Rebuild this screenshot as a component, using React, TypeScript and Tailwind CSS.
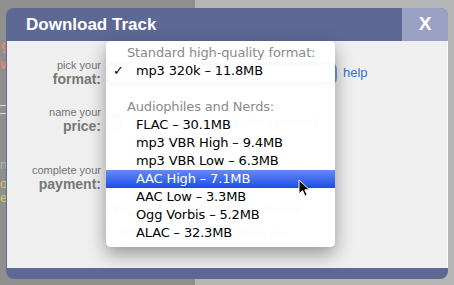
import { Fragment } from "react";

type MenuRow =
  | { kind: "header"; label: string }
  | { kind: "item"; label: string; checked?: boolean; active?: boolean }
  | { kind: "gap" };

const rows: MenuRow[] = [
  { kind: "header", label: "Standard high-quality format:" },
  { kind: "item", label: "mp3 320k – 11.8MB", checked: true },
  { kind: "gap" },
  { kind: "header", label: "Audiophiles and Nerds:" },
  { kind: "item", label: "FLAC – 30.1MB" },
  { kind: "item", label: "mp3 VBR High – 9.4MB" },
  { kind: "item", label: "mp3 VBR Low – 6.3MB" },
  { kind: "item", label: "AAC High – 7.1MB", active: true },
  { kind: "item", label: "AAC Low – 3.3MB" },
  { kind: "item", label: "Ogg Vorbis – 5.2MB" },
  { kind: "item", label: "ALAC – 32.3MB" },
];

const Label = ({ small, big }: { small: string; big: string }) => (
  <div className="w-[94px] shrink-0 text-right font-['Liberation_Sans',Arial,sans-serif]">
    <div className="text-[11px] leading-[14px] text-[#737373]">{small}</div>
    <div className="text-[14px] leading-[14px] font-bold text-[#777]">{big}</div>
  </div>
);

const Cursor = () => (
  <svg width="13" height="19" viewBox="0 0 13 19" className="absolute left-[298px] top-[179px]">
    <path
      d="M1 1 L1 15 L4.5 11.6 L7 17.2 L9.2 16.2 L6.8 10.8 L11.5 10.8 Z"
      fill="#000"
      stroke="#fff"
      strokeWidth="1"
      strokeLinejoin="round"
    />
  </svg>
);

const PopupMenu = () => (
  <div className="absolute left-[106px] top-[41px] w-[229px] h-[206px] pt-[3px] rounded-[5px] bg-white/[0.95] shadow-[0_7px_18px_rgba(0,0,0,0.38)] font-['DejaVu_Sans',sans-serif] text-[13px] tracking-[-0.15px]">
    {rows.map((row, i) => (
      <Fragment key={i}>
        {row.kind === "gap" && <div className="h-[18px]" />}
        {row.kind === "header" && (
          <div className="h-[18px] leading-[18px] pl-[21px] text-[#8a8a8a]">{row.label}</div>
        )}
        {row.kind === "item" && (
          <div
            className={
              row.active
                ? "flex h-[18px] leading-[18px] text-white bg-gradient-to-b from-[#6688f6] to-[#1a4de8]"
                : "flex h-[18px] leading-[18px] text-black"
            }
          >
            <span className="w-[30px] pl-[7px]">{row.checked ? "✓" : ""}</span>
            <span>{row.label}</span>
          </div>
        )}
      </Fragment>
    ))}
  </div>
);

export default function App() {
  return (
    <div className="relative w-[454px] h-[285px] overflow-hidden flex">
      {/* page behind the overlay */}
      <div className="w-[195px] bg-[#8f8f8f] flex flex-col pt-[36px] text-[15px] font-bold leading-[18px] font-['Liberation_Sans',Arial,sans-serif]">
        <div className="w-[6px] overflow-hidden text-[#e4867b] pl-[1px]">g</div>
        <div className="w-[6px] overflow-hidden text-[#e4867b] mt-[1px]">w</div>
        <div className="w-[6px] h-px bg-[#d8d8d8] mt-[32px]" />
        <div className="w-[6px] h-px bg-[#d8d8d8] mt-[7px]" />
        <div className="w-[6px] overflow-hidden text-[#b4b4b4] font-normal text-[13px] mt-[42px]">n</div>
        <div className="w-[6px] overflow-hidden text-[#d8c868] font-normal text-[13px] mt-[1px]">o</div>
        <div className="w-[6px] overflow-hidden text-[#d8c868] font-normal text-[13px] -mt-[4px]">er</div>
      </div>
      <div className="flex-1 bg-[#b6b6b6]" />

      {/* dialog */}
      <div className="absolute left-[6px] top-[8px] w-[442px] h-[271px] rounded-[8px] bg-[#5d6895] overflow-hidden flex flex-col">
        <div className="h-[33px] flex shrink-0">
          <div className="flex-1 pl-[20px] leading-[33px] text-[17px] font-bold text-white font-['Liberation_Sans',Arial,sans-serif]">
            Download Track
          </div>
          <div className="w-[46px] bg-[#9ba1c3] flex items-center justify-center text-white text-[19px] font-bold font-['Liberation_Sans',Arial,sans-serif]">
            X
          </div>
        </div>
        <div className="h-[227px] shrink-0 ml-[1px] bg-[#efefef] border-r border-[#fbfbfb] flex flex-col">
          <div className="flex mt-[17px]">
            <Label small="pick your" big="format:" />
            <div className="flex items-center ml-[5px] mt-[2px]">
              <div className="w-[231px] h-[23px] rounded-[7px] border-[3px] border-[#6d9fe4] bg-white flex justify-end items-center pr-[6px]">
                <span className="text-[11px] text-[#999]">⇕</span>
              </div>
              <span className="ml-[6px] text-[13px] text-[#2f72dc] font-['Liberation_Sans',Arial,sans-serif]">help</span>
            </div>
          </div>
          <div className="flex mt-[19px]">
            <Label small="name your" big="price:" />
            <div className="flex items-center ml-[10px] font-['Liberation_Sans',Arial,sans-serif]">
              <span className="text-[22px] text-[#bbb] font-bold">$</span>
              <span className="ml-[104px] text-[13px] text-[#a8bce4]">(1 min.) convert</span>
            </div>
          </div>
          <div className="flex mt-[25px]">
            <Label small="complete your" big="payment:" />
            <div className="flex flex-col ml-[7px] -mt-[1px] font-['Liberation_Sans',Arial,sans-serif]">
              <div className="w-[197px] h-[13px] bg-[#c8ecc0] rounded-[2px]" />
              <div className="flex mt-[25px] items-center">
                <div className="w-[76px] h-[16px] border border-[#c4d0e8] rounded-[2px] text-[11px] font-bold text-[#a0b4dc] pl-[4px] leading-[14px]">
                  VISA
                </div>
                <div className="ml-[76px] w-[45px] h-[18px] border border-[#f4cca4] rounded-[3px] text-[11px] font-bold italic text-[#a0b8dc] leading-[16px] text-center">
                  PayPal
                </div>
              </div>
              <div className="mt-[6px] text-[12px] text-[#b4c6ea] pl-[10px] flex">
                <span>Pay</span>
                <span className="ml-[100px]">show me.</span>
              </div>
            </div>
          </div>
        </div>
        <div className="flex-1" />
      </div>

      <PopupMenu />
      <Cursor />
    </div>
  );
}
